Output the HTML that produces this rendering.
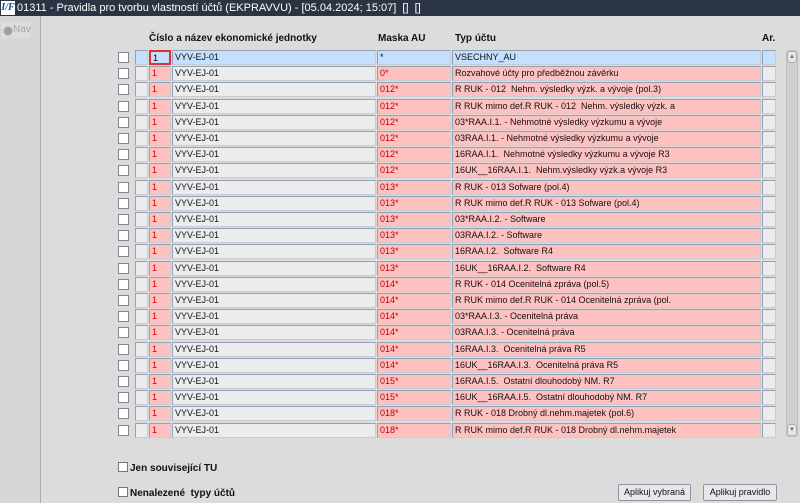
<!DOCTYPE html>
<html><head><meta charset="utf-8"><style>
*{box-sizing:border-box;margin:0;padding:0}
body{width:800px;height:503px;overflow:hidden;background:#dcdcdc;font-family:"Liberation Sans",Arial,sans-serif;position:relative}
.title{position:absolute;left:0;top:0;width:800px;height:16px;background:#2b3443;color:#fff;font-size:11px;line-height:16px;padding-left:17px;white-space:nowrap}
.logo{position:absolute;left:1px;top:1px;width:14px;height:14px;background:#fff;color:#1a3fb0;font:bold italic 10px/14px "Liberation Serif",serif;text-align:center}
.left{position:absolute;left:0;top:16px;width:41px;height:487px;background:#d6d6d6;border-right:1px solid #a8aeb6}
.nav{position:absolute;left:2px;top:6px;width:28px;height:16px;background:#dedede;color:#a0a4aa;font-size:10px;line-height:16px;padding-left:11px}
.nav:before{content:"";position:absolute;left:1px;top:4px;width:8px;height:8px;border-radius:50%;background:#9aa0a8;border:1px solid #c8c8c8}
.h{position:absolute;top:33px;font-size:10px;font-weight:bold;color:#111}
.row{position:absolute;left:117px;height:16px;width:660px}
.c{position:absolute;top:0;height:15px;border:1px solid #95a1b2;border-right-color:#c8ccd4;border-bottom-color:#c8ccd4;font-size:9px;line-height:13px;padding-left:2px;white-space:nowrap;overflow:hidden;color:#111}
.cb{left:1px;top:2px;width:11px;height:11px;border:1px solid #7f8790;background:#fff;padding:0}
.s{left:18px;width:13px;background:#ececec}
.n{left:32px;width:22px;background:#ffc0c0;color:#c00}
.nm{left:55px;width:204px;background:#ececec}
.m{left:260px;width:74px;background:#ffc0c0;color:#b00}
.t{left:335px;width:309px;background:#ffc0c0}
.a{left:645px;width:14px;background:#ececec}
.sel .s,.sel .nm,.sel .m,.sel .t,.sel .a{background:#c4e0fc}
.sel .n{background:#c4e0fc;border:2px solid #e03030;color:#000}
.sel .m{color:#111}
.sb{position:absolute;left:786px;top:50px;width:12px;height:387px;background:#d0d0d0;border:1px solid #c0c0c0;border-radius:3px}
.btnu,.btnd{position:absolute;left:0;width:10px;height:12px;background:#e6e6e6;border:1px solid #a8b0bc;border-radius:3px;font-size:6px;text-align:center;color:#607080;line-height:10px}
.btnu{top:0}.btnd{bottom:0}
.chk{position:absolute;left:118px;font-size:10px;font-weight:bold;color:#111}
.chk span{display:inline-block;width:10px;height:10px;border:1px solid #6f7780;background:#fff;vertical-align:-1px;margin-right:2px}
.btn{position:absolute;top:484px;height:17px;background:#e8e8e8;border:1px solid #8a96a8;border-radius:2px;font-size:9px;line-height:15px;text-align:center;color:#111}
</style></head><body>
<div class="title"><div class="logo">I/F</div>01311 - Pravidla pro tvorbu vlastností účtů (EKPRAVVU) - [05.04.2024; 15:07]&nbsp; []&nbsp; []</div>
<div class="left"><div class="nav">Nav</div></div>
<div class="h" style="left:149px">Číslo a název ekonomické jednotky</div>
<div class="h" style="left:378px">Maska AU</div>
<div class="h" style="left:455px">Typ účtu</div>
<div class="h" style="left:762px">Ar.</div>

<div class="row sel" style="top:50px"><div class="c cb"></div><div class="c s"></div><div class="c n">1</div><div class="c nm">VYV-EJ-01</div><div class="c m">*</div><div class="c t">VSECHNY_AU</div><div class="c a"></div></div>
<div class="row" style="top:66.2px"><div class="c cb"></div><div class="c s"></div><div class="c n">1</div><div class="c nm">VYV-EJ-01</div><div class="c m">0*</div><div class="c t">Rozvahové účty pro předběžnou závěrku</div><div class="c a"></div></div>
<div class="row" style="top:82.4px"><div class="c cb"></div><div class="c s"></div><div class="c n">1</div><div class="c nm">VYV-EJ-01</div><div class="c m">012*</div><div class="c t">R RUK - 012&nbsp; Nehm. výsledky výzk. a vývoje (pol.3)</div><div class="c a"></div></div>
<div class="row" style="top:98.6px"><div class="c cb"></div><div class="c s"></div><div class="c n">1</div><div class="c nm">VYV-EJ-01</div><div class="c m">012*</div><div class="c t">R RUK mimo def.R RUK - 012&nbsp; Nehm. výsledky výzk. a</div><div class="c a"></div></div>
<div class="row" style="top:114.8px"><div class="c cb"></div><div class="c s"></div><div class="c n">1</div><div class="c nm">VYV-EJ-01</div><div class="c m">012*</div><div class="c t">03*RAA.I.1. - Nehmotné výsledky výzkumu a vývoje</div><div class="c a"></div></div>
<div class="row" style="top:131px"><div class="c cb"></div><div class="c s"></div><div class="c n">1</div><div class="c nm">VYV-EJ-01</div><div class="c m">012*</div><div class="c t">03RAA.I.1. - Nehmotné výsledky výzkumu a vývoje</div><div class="c a"></div></div>
<div class="row" style="top:147.2px"><div class="c cb"></div><div class="c s"></div><div class="c n">1</div><div class="c nm">VYV-EJ-01</div><div class="c m">012*</div><div class="c t">16RAA.I.1.&nbsp; Nehmotné výsledky výzkumu a vývoje R3</div><div class="c a"></div></div>
<div class="row" style="top:163.4px"><div class="c cb"></div><div class="c s"></div><div class="c n">1</div><div class="c nm">VYV-EJ-01</div><div class="c m">012*</div><div class="c t">16UK__16RAA.I.1.&nbsp; Nehm.výsledky výzk.a vývoje R3</div><div class="c a"></div></div>
<div class="row" style="top:179.6px"><div class="c cb"></div><div class="c s"></div><div class="c n">1</div><div class="c nm">VYV-EJ-01</div><div class="c m">013*</div><div class="c t">R RUK - 013 Sofware (pol.4)</div><div class="c a"></div></div>
<div class="row" style="top:195.8px"><div class="c cb"></div><div class="c s"></div><div class="c n">1</div><div class="c nm">VYV-EJ-01</div><div class="c m">013*</div><div class="c t">R RUK mimo def.R RUK - 013 Sofware (pol.4)</div><div class="c a"></div></div>
<div class="row" style="top:212px"><div class="c cb"></div><div class="c s"></div><div class="c n">1</div><div class="c nm">VYV-EJ-01</div><div class="c m">013*</div><div class="c t">03*RAA.I.2. - Software</div><div class="c a"></div></div>
<div class="row" style="top:228.2px"><div class="c cb"></div><div class="c s"></div><div class="c n">1</div><div class="c nm">VYV-EJ-01</div><div class="c m">013*</div><div class="c t">03RAA.I.2. - Software</div><div class="c a"></div></div>
<div class="row" style="top:244.4px"><div class="c cb"></div><div class="c s"></div><div class="c n">1</div><div class="c nm">VYV-EJ-01</div><div class="c m">013*</div><div class="c t">16RAA.I.2.&nbsp; Software R4</div><div class="c a"></div></div>
<div class="row" style="top:260.6px"><div class="c cb"></div><div class="c s"></div><div class="c n">1</div><div class="c nm">VYV-EJ-01</div><div class="c m">013*</div><div class="c t">16UK__16RAA.I.2.&nbsp; Software R4</div><div class="c a"></div></div>
<div class="row" style="top:276.8px"><div class="c cb"></div><div class="c s"></div><div class="c n">1</div><div class="c nm">VYV-EJ-01</div><div class="c m">014*</div><div class="c t">R RUK - 014 Ocenitelná zpráva (pol.5)</div><div class="c a"></div></div>
<div class="row" style="top:293px"><div class="c cb"></div><div class="c s"></div><div class="c n">1</div><div class="c nm">VYV-EJ-01</div><div class="c m">014*</div><div class="c t">R RUK mimo def.R RUK - 014 Ocenitelná zpráva (pol.</div><div class="c a"></div></div>
<div class="row" style="top:309.2px"><div class="c cb"></div><div class="c s"></div><div class="c n">1</div><div class="c nm">VYV-EJ-01</div><div class="c m">014*</div><div class="c t">03*RAA.I.3. - Ocenitelná práva</div><div class="c a"></div></div>
<div class="row" style="top:325.4px"><div class="c cb"></div><div class="c s"></div><div class="c n">1</div><div class="c nm">VYV-EJ-01</div><div class="c m">014*</div><div class="c t">03RAA.I.3. - Ocenitelná práva</div><div class="c a"></div></div>
<div class="row" style="top:341.6px"><div class="c cb"></div><div class="c s"></div><div class="c n">1</div><div class="c nm">VYV-EJ-01</div><div class="c m">014*</div><div class="c t">16RAA.I.3.&nbsp; Ocenitelná práva R5</div><div class="c a"></div></div>
<div class="row" style="top:357.8px"><div class="c cb"></div><div class="c s"></div><div class="c n">1</div><div class="c nm">VYV-EJ-01</div><div class="c m">014*</div><div class="c t">16UK__16RAA.I.3.&nbsp; Ocenitelná práva R5</div><div class="c a"></div></div>
<div class="row" style="top:374px"><div class="c cb"></div><div class="c s"></div><div class="c n">1</div><div class="c nm">VYV-EJ-01</div><div class="c m">015*</div><div class="c t">16RAA.I.5.&nbsp; Ostatní dlouhodobý NM. R7</div><div class="c a"></div></div>
<div class="row" style="top:390.2px"><div class="c cb"></div><div class="c s"></div><div class="c n">1</div><div class="c nm">VYV-EJ-01</div><div class="c m">015*</div><div class="c t">16UK__16RAA.I.5.&nbsp; Ostatní dlouhodobý NM. R7</div><div class="c a"></div></div>
<div class="row" style="top:406.4px"><div class="c cb"></div><div class="c s"></div><div class="c n">1</div><div class="c nm">VYV-EJ-01</div><div class="c m">018*</div><div class="c t">R RUK - 018 Drobný dl.nehm.majetek (pol.6)</div><div class="c a"></div></div>
<div class="row" style="top:422.6px"><div class="c cb"></div><div class="c s"></div><div class="c n">1</div><div class="c nm">VYV-EJ-01</div><div class="c m">018*</div><div class="c t">R RUK mimo def.R RUK - 018 Drobný dl.nehm.majetek</div><div class="c a"></div></div>

<div class="sb"><div class="btnu">▲</div><div class="btnd">▼</div></div>

<div class="chk" style="top:462px"><span></span>Jen související TU</div>
<div class="chk" style="top:487px"><span></span>Nenalezené&nbsp; typy účtů</div>
<div class="btn" style="left:618px;width:73px">Aplikuj vybraná</div>
<div class="btn" style="left:703px;width:74px">Aplikuj pravidlo</div>
</body></html>
